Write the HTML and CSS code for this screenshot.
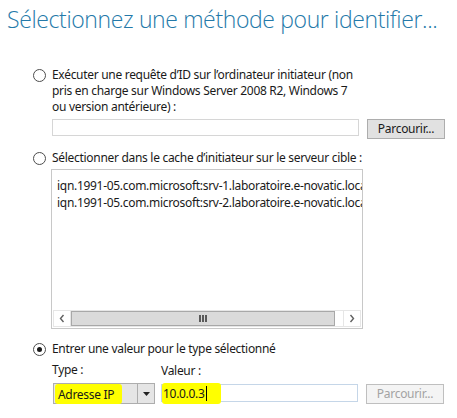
FILE: index.html
```html
<!DOCTYPE html>
<html lang="fr">
<head>
<meta charset="utf-8">
<link rel="stylesheet" href="styles.css">
</head>
<body>
<h1 class="title">Sélectionnez une méthode pour identifier...</h1>
<div class="options">
  <div class="option opt1">
    <span class="radio"></span>
    <div class="body">
      <div class="label">Exécuter une requête d’ID sur l’ordinateur initiateur (non pris en charge sur Windows Server 2008 R2, Windows 7 ou version antérieure) :</div>
      <div class="row">
        <div class="textbox wide"></div>
        <button class="btn">Parcourir...</button>
      </div>
    </div>
  </div>
  <div class="option opt2">
    <span class="radio"></span>
    <div class="body">
      <div class="label">Sélectionner dans le cache d’initiateur sur le serveur cible :</div>
      <div class="listbox">
        <div class="items">
          <div class="item">iqn.1991-05.com.microsoft:srv-1.laboratoire.e-novatic.local</div>
          <div class="item">iqn.1991-05.com.microsoft:srv-2.laboratoire.e-novatic.local</div>
        </div>
        <div class="hscroll">
          <span class="arrow">
            <svg width="16" height="15" viewBox="0 0 16 15"><path d="M9.5 4 L6.5 7.5 L9.5 11" fill="none" stroke="#606060" stroke-width="1.4"/></svg>
          </span>
          <span class="thumb">
            <svg width="8" height="7" viewBox="0 0 8 7"><rect x="0" y="0" width="2" height="7" fill="#5a5a5a"/><rect x="3" y="0" width="2" height="7" fill="#5a5a5a"/><rect x="6" y="0" width="2" height="7" fill="#5a5a5a"/></svg>
          </span>
          <span class="track"></span>
          <span class="arrow">
            <svg width="16" height="15" viewBox="0 0 16 15"><path d="M6.5 4 L9.5 7.5 L6.5 11" fill="none" stroke="#606060" stroke-width="1.4"/></svg>
          </span>
        </div>
      </div>
    </div>
  </div>
  <div class="option opt3">
    <span class="radio checked"></span>
    <div class="body">
      <div class="label">Entrer une valeur pour le type sélectionné</div>
      <div class="fields">
        <div class="field type-field">
          <div class="flabel">Type :</div>
          <div class="combo">
            <span class="combo-text"><span class="hl">Adresse IP</span></span>
            <span class="combo-btn">
              <svg width="7" height="4" viewBox="0 0 7 4"><path d="M0 0 H7 L3.5 4 Z" fill="#222"/></svg>
            </span>
          </div>
        </div>
        <div class="field value-field">
          <div class="flabel">Valeur :</div>
          <div class="textbox value"><span class="hl val">10.0.0.3<span class="caret"></span></span></div>
        </div>
        <button class="btn disabled">Parcourir...</button>
      </div>
    </div>
  </div>
</div>
</body>
</html>
```
FILE: styles.css
```css
html, body {
  margin: 0;
  padding: 0;
  background: #ffffff;
}
body {
  width: 457px;
  height: 418px;
  overflow: hidden;
  font-family: "Noto Sans", "Open Sans", sans-serif;
  font-size: 12px;
  letter-spacing: -0.3px;
  color: #1a1a1a;
}
.title {
  margin: 0;
  padding: 4px 0 0 7px;
  height: 52px;
  box-sizing: border-box;
  font-family: "Open Sans", "Noto Sans", sans-serif;
  font-weight: 300;
  font-size: 23px;
  line-height: 30px;
  color: #2479a9;
  letter-spacing: -0.37px;
  white-space: nowrap;
}
.options {
  padding: 15px 0 0 33px;
  display: flex;
  flex-direction: column;
}
.option {
  display: flex;
  gap: 6px;
}
.radio {
  flex: none;
  width: 11px;
  height: 11px;
  border: 1px solid #4d4d4d;
  border-radius: 50%;
  margin-top: 2px;
  box-sizing: content-box;
  display: flex;
  align-items: center;
  justify-content: center;
  background: #fff;
}
.radio.checked::after {
  content: "";
  width: 5px;
  height: 5px;
  border-radius: 50%;
  background: #1a1a1a;
}
.body {
  display: flex;
  flex-direction: column;
}
.label {
  line-height: 16px;
  white-space: nowrap;
}
.opt1 .label {
  width: 312px;
  white-space: normal;
}
.row {
  display: flex;
  margin-top: 4px;
  gap: 8px;
  align-items: flex-start;
}
.textbox {
  box-sizing: border-box;
  border: 1px solid #d6d6d6;
  background: #fff;
}
.textbox.wide {
  width: 307px;
  height: 17px;
}
.btn {
  box-sizing: border-box;
  width: 78px;
  height: 20px;
  margin: 0;
  padding: 0;
  border: 1px solid #adadad;
  background: #e1e1e1;
  font-family: inherit;
  font-size: 12px;
  letter-spacing: -0.3px;
  color: #1a1a1a;
  line-height: 18px;
}
.btn.disabled {
  border-color: #bfbfbf;
  background: #f4f4f4;
  color: #a3a3a3;
}
.opt2 {
  margin-top: 11px;
}
.listbox {
  margin-top: 3px;
  margin-left: -1px;
  box-sizing: border-box;
  width: 312px;
  height: 160px;
  border: 1px solid #c8c8c8;
  display: flex;
  flex-direction: column;
  overflow: hidden;
}
.items {
  flex: 1;
  padding: 7px 0 0 5px;
  overflow: hidden;
}
.item {
  line-height: 17px;
  white-space: nowrap;
}
.hscroll {
  display: flex;
  height: 17px;
  margin: 0 1px 1px 1px;
  border: 1px solid #e6e6e6;
  box-sizing: border-box;
}
.arrow {
  width: 16px;
  flex: none;
  display: flex;
  align-items: center;
  justify-content: center;
  background: #fff;
}
.arrow:first-child {
  border-right: 1px solid #e6e6e6;
}
.arrow:last-child {
  border-left: 1px solid #e6e6e6;
}
.thumb {
  width: 264px;
  flex: none;
  box-sizing: border-box;
  background: #dadada;
  border: 1px solid #a8a8a8;
  display: flex;
  align-items: center;
  justify-content: center;
}
.track {
  flex: 1;
}
.opt3 {
  margin-top: 12px;
}
.fields {
  display: flex;
  align-items: flex-end;
  margin-top: 5px;
}
.field {
  display: flex;
  flex-direction: column;
}
.flabel {
  line-height: 16px;
  margin-bottom: 5px;
}
.type-field {
  width: 109px;
}
.combo {
  margin-left: 1px;
  box-sizing: border-box;
  width: 102px;
  height: 21px;
  border: 1px solid #adadad;
  background: #e5e5e5;
  display: flex;
}
.combo-text {
  flex: 1;
  display: flex;
  align-items: center;
  padding-left: 1px;
}
.combo-btn {
  width: 16px;
  border-left: 1px solid #adadad;
  display: flex;
  align-items: center;
  justify-content: center;
}
.hl {
  background: #ffff00;
  color: #1a1a1a;
  line-height: 19px;
  padding: 1px 8px 0 3px;
  border-radius: 3px;
}
.value-field {
  width: 205px;
}
.textbox.value {
  width: 197px;
  height: 18px;
  border-color: #c5d6e8;
  display: flex;
  align-items: center;
  margin-bottom: 2px;
}
.hl.val {
  display: inline-flex;
  align-items: center;
  padding: 1px 14px 1px 1px;
}
.caret {
  width: 1px;
  height: 15px;
  margin-left: 1px;
  background: #000;
}
```
